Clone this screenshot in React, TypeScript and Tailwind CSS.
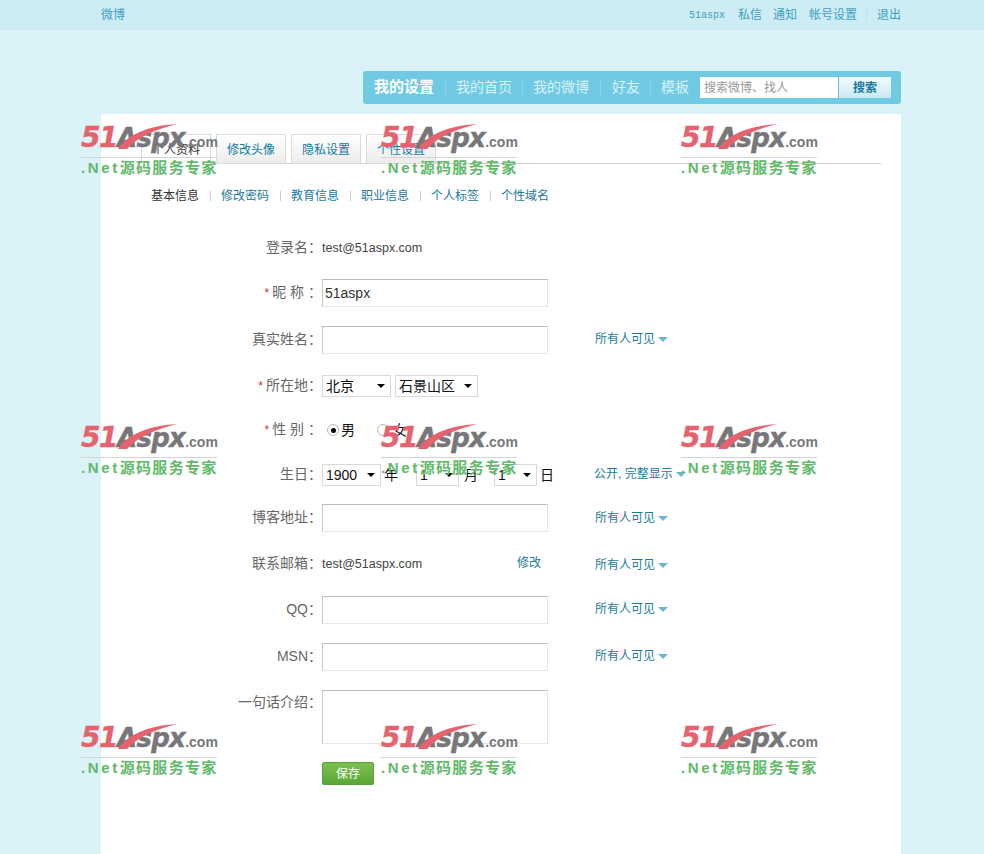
const cn = '[font-family:"Liberation_Sans","Noto_Sans_CJK_SC",sans-serif]';

function Watermark() {
    return (
        <div className="relative w-[138px] h-[54px] pointer-events-none">
            <div className="absolute left-0 top-[-3px] flex items-baseline leading-[34px] whitespace-nowrap">
                <span className="[font-family:'DejaVu_Sans',sans-serif] italic font-bold text-[28px] tracking-[-1.5px] text-[#e5636e] [-webkit-text-stroke:0.4px_#e5636e]">51</span>
                <span className="[font-family:'DejaVu_Sans',sans-serif] italic font-bold text-[26px] tracking-[-0.7px] text-[#77777a] [-webkit-text-stroke:0.4px_#77777a]">Aspx</span>
                <span className="text-[14px] font-bold text-[#77777a]">.com</span>
            </div>
            <svg className="absolute left-[36px] top-0" width="64" height="26" viewBox="0 0 64 26">
                <path d="M1 25 C10 11 30 2 60 0 C40 5 22 12 10 25 Z" fill="#e5636e" />
            </svg>
            <div className="absolute left-0 top-[33px] w-[136px] h-px bg-[#d4d4d4]" />
            <div className="absolute left-0 top-[35px] text-[15px] leading-[18px] font-bold text-[#62b96a] whitespace-nowrap">
                <span className="tracking-[2.6px]">.Net</span>
                <span className="tracking-[1.3px]">源码服务专家</span>
            </div>
        </div>
    );
}

function Tab({ label, active }: { label: string; active?: boolean }) {
    return (
        <div
            className={
                "w-[70px] h-[30px] pt-[2px] border border-[#dcdcdc] flex items-center justify-center text-[12px] " +
                (active
                    ? "bg-white border-b-white text-[#333]"
                    : "bg-gradient-to-b from-white to-[#ececec] text-[#0f7ea3]")
            }
        >
            {label}
        </div>
    );
}

function Vis({ label = "所有人可见", className = "ml-[47px] -mt-[2px]" }: { label?: string; className?: string }) {
    return (
        <div className={"flex items-center text-[12px] text-[#1a7a9c] whitespace-nowrap " + className}>
            {label}
            <span className="ml-[3px] w-0 h-0 border-x-[5px] border-x-transparent border-t-[5px] border-t-[#6db5d3]" />
        </div>
    );
}

function Label({ text, star }: { text: string; star?: boolean }) {
    return (
        <div className="w-[221px] -mt-[2px] text-right text-[14px] text-[#666] whitespace-nowrap">
            {star && <span className="text-[#c0392b] text-[12px] mr-[3px]">*</span>}
            {text}
        </div>
    );
}

function TextBox({ value = "" }: { value?: string }) {
    return (
        <input
            readOnly
            value={value}
            className="w-[226px] h-[28px] border border-[#e6e6e6] border-t-[#bdbdbd] border-l-[#c8c8c8] px-[2px] text-[14px] text-[#333] bg-white outline-none"
        />
    );
}

function Sel({ value, w }: { value: string; w: string }) {
    return (
        <div className={"relative h-[22px] border border-[#dadada] bg-white flex items-center pl-[3px] text-[14px] text-[#111] " + w}>
            <select className="appearance-none bg-transparent outline-none w-full" defaultValue={value}>
                <option>{value}</option>
            </select>
            <span className="absolute right-[5px] top-[8px] w-0 h-0 border-x-[4px] border-x-transparent border-t-[4px] border-t-black" />
        </div>
    );
}

function Radio({ on }: { on?: boolean }) {
    return (
        <span className="w-[12px] h-[12px] rounded-full border border-[#b8b8b8] bg-white flex items-center justify-center">
            {on && <span className="w-[5px] h-[5px] rounded-full bg-black" />}
        </span>
    );
}

export default function App() {
    return (
        <div className={"relative min-h-[854px] h-[854px] overflow-hidden bg-[#daf2f8] " + cn}>
            <div className="h-[30px] bg-[#cdecf4]">
                <div className="ml-[101px] w-[800px] h-full flex items-center justify-between text-[12px] text-[#3f9fc0]">
                    <span>微博</span>
                    <div className="flex items-center">
                        <span className="[font-family:'Liberation_Mono',monospace] text-[10px]">51aspx</span>
                        <span className="ml-[13px]">私信</span>
                        <span className="ml-[11px]">通知</span>
                        <span className="ml-[12px]">帐号设置</span>
                        <span className="ml-[9px] w-px h-[12px] bg-[#bfe3ec]" />
                        <span className="ml-[10px]">退出</span>
                    </div>
                </div>
            </div>

            <div className="ml-[363px] mt-[41px] w-[538px] h-[33px] rounded-[3px] bg-[#70cae3] flex items-center pl-[11px] text-[14px] text-[#daf2f8]">
                <span className="text-[15px] font-bold text-white">我的设置</span>
                <span className="ml-[11px] w-px h-[14px] bg-[#8dd5e8]" />
                <span className="ml-[10px]">我的首页</span>
                <span className="ml-[10px] w-px h-[14px] bg-[#8dd5e8]" />
                <span className="ml-[10px]">我的微博</span>
                <span className="ml-[11px] w-px h-[14px] bg-[#8dd5e8]" />
                <span className="ml-[11px]">好友</span>
                <span className="ml-[10px] w-px h-[14px] bg-[#8dd5e8]" />
                <span className="ml-[10px]">模板</span>
                <div className="ml-[11px] w-[138px] h-[21px] bg-white flex items-center pl-[4px] text-[12px] text-[#999]">
                    搜索微博、找人
                </div>
                <div className="w-[53px] h-[21px] border-l border-[#7db8cc] bg-gradient-to-b from-[#f4fbfd] to-[#c9eaf3] flex items-center justify-center text-[12px] font-bold text-[#17799c]">
                    搜索
                </div>
            </div>

            <div className="ml-[101px] mt-[10px] w-[800px] h-[740px] bg-white pt-[20px]">
                <div className="ml-[40px] w-[740px] h-[30px] border-b border-[#cfcfcf] flex gap-[5px]">
                    <Tab label="个人资料" active />
                    <Tab label="修改头像" />
                    <Tab label="隐私设置" />
                    <Tab label="个性设置" />
                </div>

                <div className="ml-[50px] mt-[22px] h-[20px] flex items-center text-[12px] text-[#1a7a9c]">
                    <span className="text-[#333]">基本信息</span>
                    {["修改密码", "教育信息", "职业信息", "个人标签", "个性域名"].map((t) => (
                        <span key={t} className="flex items-center">
                            <span className="ml-[11px] mr-[10px] w-px h-[10px] bg-[#ccc]" />
                            <span>{t}</span>
                        </span>
                    ))}
                </div>

                <div className="mt-[19px]">
                    <div className="h-[46px] flex items-center">
                        <Label text="登录名：" />
                        <span className="text-[12.5px] text-[#444]">test@51aspx.com</span>
                    </div>
                    <div className="h-[44px] flex items-center">
                        <Label text="昵 称 ：" star />
                        <TextBox value="51aspx" />
                    </div>
                    <div className="h-[50px] flex items-center">
                        <Label text="真实姓名：" />
                        <TextBox />
                        <Vis />
                    </div>
                    <div className="h-[42px] flex items-center">
                        <Label text="所在地：" star />
                        <Sel value="北京" w="w-[69px]" />
                        <div className="ml-[4px]">
                            <Sel value="石景山区" w="w-[83px]" />
                        </div>
                    </div>
                    <div className="h-[46px] flex items-center text-[14px] text-[#111]">
                        <Label text="性 别 ：" star />
                        <span className="ml-[5px]"><Radio on /></span>
                        <span className="ml-[2px]">男</span>
                        <span className="ml-[22px]"><Radio /></span>
                        <span className="ml-[4px]">女</span>
                    </div>
                    <div className="h-[44px] flex items-center text-[14px] text-[#111]">
                        <Label text="生日：" />
                        <Sel value="1900" w="w-[59px]" />
                        <span className="ml-[3px] w-[32px]">年</span>
                        <Sel value="1" w="w-[43px]" />
                        <span className="ml-[5px] w-[30px]">月</span>
                        <Sel value="1" w="w-[43px]" />
                        <span className="ml-[3px]">日</span>
                        <Vis label="公开, 完整显示" className="ml-[40px] -mt-[2px]" />
                    </div>
                    <div className="h-[42px] flex items-center">
                        <Label text="博客地址：" />
                        <TextBox />
                        <Vis className="ml-[47px]" />
                    </div>
                    <div className="h-[50px] flex items-center">
                        <Label text="联系邮箱：" />
                        <span className="w-[195px] text-[12.5px] text-[#444]">test@51aspx.com</span>
                        <span className="w-[31px] -mt-[2px] text-[12px] text-[#1a7a9c]">修改</span>
                        <Vis className="ml-[47px] mt-[2px]" />
                    </div>
                    <div className="h-[42px] flex items-center">
                        <Label text="QQ：" />
                        <TextBox />
                        <Vis />
                    </div>
                    <div className="h-[52px] flex items-center">
                        <Label text="MSN：" />
                        <TextBox />
                        <Vis />
                    </div>
                    <div className="flex pt-[7px]">
                        <div className="pt-[4px]">
                            <Label text="一句话介绍：" />
                        </div>
                        <textarea
                            readOnly
                            className="w-[226px] h-[54px] border border-[#e6e6e6] border-t-[#bdbdbd] border-l-[#c8c8c8] resize-none outline-none"
                        />
                    </div>
                    <div className="ml-[221px] mt-[18px] w-[52px] h-[23px] rounded-[2px] border border-[#5a9e3a] bg-gradient-to-b from-[#7cc050] to-[#58a836] flex items-center justify-center text-[12px] text-white">
                        保存
                    </div>
                </div>
            </div>

            {[124, 424, 724].map((y) =>
                [81, 381, 681].map((x) => (
                    <div key={x + "-" + y} className="absolute" style={{ left: x, top: y }}>
                        <Watermark />
                    </div>
                )),
            )}
        </div>
    );
}
